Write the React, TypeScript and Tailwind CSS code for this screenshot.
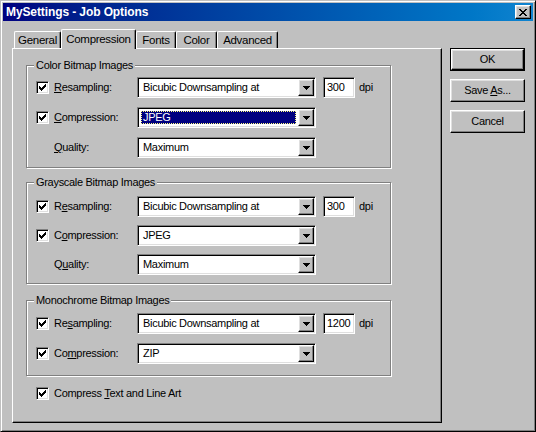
import React from "react";

const raised =
  "border border-t-white border-l-white border-b-black border-r-black shadow-[inset_-1px_-1px_0_#808080,inset_1px_1px_0_#dfdfdf]";
const sunken =
  "border border-t-[#808080] border-l-[#808080] border-b-white border-r-white shadow-[inset_1px_1px_0_#000,inset_-1px_-1px_0_#dfdfdf]";

function CheckMark() {
  return (
    <svg width="7" height="7" viewBox="0 0 7 7" shapeRendering="crispEdges">
      <path
        fill="#000"
        d="M6 0h1v1h-1z M5 1h2v1h-2z M0 2h1v1h-1z M4 2h3v1h-3z M0 3h2v1h-2z M3 3h3v1h-3z M0 4h5v1h-5z M1 5h3v1h-3z M2 6h1v1h-1z"
      />
    </svg>
  );
}

function Checkbox() {
  return (
    <div className={`w-[13px] h-[13px] shrink-0 bg-white flex items-center justify-center ${sunken}`}>
      <CheckMark />
    </div>
  );
}

function Arrow() {
  return (
    <svg width="7" height="4" viewBox="0 0 7 4" shapeRendering="crispEdges">
      <path fill="#000" d="M0 0h7v1h-7z M1 1h5v1h-5z M2 2h3v1h-3z M3 3h1v1h-1z" />
    </svg>
  );
}

function Combo({ value, focused }: { value: string; focused?: boolean }) {
  return (
    <div className={`w-[179px] h-[21px] shrink-0 bg-white flex p-[2px] ${sunken}`}>
      <div className="flex-1 flex items-stretch">
        {focused ? (
          <div className="flex-1 m-[1px] mr-[2px] bg-[#000080] text-white border border-dotted border-[#ffff7f] flex items-center pl-[1px]">
            {value}
          </div>
        ) : (
          <div className="flex-1 flex items-center pl-[3px]">{value}</div>
        )}
      </div>
      <div className={`w-[16px] h-[17px] -mt-[1px] -mr-[1px] bg-[#c0c0c0] flex items-center justify-center pl-[1px] pt-[1px] ${raised}`}>
        <Arrow />
      </div>
    </div>
  );
}

function Row({
  label,
  ul,
  value,
  check = true,
  focused,
  dpi,
}: {
  label: string;
  ul: number;
  value: string;
  check?: boolean;
  focused?: boolean;
  dpi?: string;
}) {
  return (
    <div className="flex items-center h-[21px]">
      {check ? <Checkbox /> : <div className="w-[13px] shrink-0" />}
      <div className="ml-[5px] w-[83px] shrink-0">
        {label.slice(0, ul)}
        <u className="underline-offset-1">{label[ul]}</u>
        {label.slice(ul + 1)}
      </div>
      <Combo value={value} focused={focused} />
      {dpi && (
        <>
          <div className={`ml-[7px] w-[32px] h-[21px] bg-white flex items-center pl-[3px] ${sunken}`}>{dpi}</div>
          <div className="ml-[4px]">dpi</div>
        </>
      )}
    </div>
  );
}

function Group({
  title,
  className,
  children,
}: {
  title: string;
  className: string;
  children: React.ReactNode;
}) {
  return (
    <div
      className={`relative w-[365px] border border-[#808080] shadow-[inset_1px_1px_0_#fff,1px_1px_0_#fff] pl-[9px] flex flex-col ${className}`}
    >
      <span className="absolute -top-[7px] left-[7px] px-[2px] bg-[#c0c0c0] leading-[13px]">{title}</span>
      {children}
    </div>
  );
}

function Button({ children, primary }: { children: React.ReactNode; primary?: boolean }) {
  if (primary) {
    return (
      <div className="w-[75px] h-[23px] border border-black">
        <div className={`w-full h-full bg-[#c0c0c0] flex items-center justify-center ${raised}`}>{children}</div>
      </div>
    );
  }
  return (
    <div className={`w-[75px] h-[23px] bg-[#c0c0c0] flex items-center justify-center ${raised}`}>{children}</div>
  );
}

const tabs = [
  { name: "General", w: "w-[47px]" },
  { name: "Compression", w: "w-[75px]", active: true },
  { name: "Fonts", w: "w-[40px]" },
  { name: "Color", w: "w-[41px]" },
  { name: "Advanced", w: "w-[61px]" },
];

export default function App() {
  return (
    <div className="w-[536px] h-[432px] bg-[#c0c0c0] border border-t-[#c0c0c0] border-l-[#c0c0c0] border-b-black border-r-black shadow-[inset_1px_1px_0_#fff,inset_-1px_-1px_0_#808080] p-[2px] font-['Liberation_Sans',Arial,sans-serif] text-[11px] leading-[13px] tracking-[-0.3px] text-black select-none">
      {/* title bar */}
      <div className="h-[18px] bg-linear-to-r from-[#000080] to-[#1084d0] flex items-center justify-between pl-[3px] pr-[2px]">
        <span className="text-white font-bold text-[12px] tracking-[-0.1px]">MySettings - Job Options</span>
        <div className={`w-[16px] h-[14px] bg-[#c0c0c0] flex items-center justify-center ${raised}`}>
          <svg width="8" height="7" viewBox="0 0 8 7" shapeRendering="crispEdges">
            <path
              fill="#000"
              d="M0 0h2v1h-2z M6 0h2v1h-2z M1 1h2v1h-2z M5 1h2v1h-2z M2 2h4v1h-4z M3 3h2v1h-2z M2 4h4v1h-4z M1 5h2v1h-2z M5 5h2v1h-2z M0 6h2v1h-2z M6 6h2v1h-2z"
            />
          </svg>
        </div>
      </div>

      <div className="flex pt-[8px] pl-[9px]">
        <div className="w-[430px] flex flex-col">
          {/* tabs */}
          <div className="h-[19px] flex items-start pl-[2px]">
            {tabs.map((t) =>
              t.active ? (
                <div
                  key={t.name}
                  className={`${t.w} h-[20px] relative z-10 bg-[#c0c0c0] border-l border-t border-r border-l-white border-t-white border-r-black shadow-[inset_-1px_0_0_#808080] rounded-t-[2px] flex justify-center pt-[3px] text-[11.5px]`}
                >
                  {t.name}
                </div>
              ) : (
                <div
                  key={t.name}
                  className={`${t.w} mt-[2px] h-[17px] bg-[#c0c0c0] border-l border-t border-r border-l-white border-t-white border-r-black shadow-[inset_-1px_0_0_#808080] rounded-t-[2px] flex justify-center pt-[2px] text-[11.5px]`}
                >
                  {t.name}
                </div>
              )
            )}
          </div>

          {/* panel */}
          <div className="h-[375px] border border-t-white border-l-white border-b-black border-r-black shadow-[inset_-1px_-1px_0_#808080] pl-[13px] pt-[16px] flex flex-col">
            <Group title="Color Bitmap Images" className="pt-[11px] pb-[9px] gap-[9px]">
              <Row label="Resampling:" ul={0} value="Bicubic Downsampling at" dpi="300" />
              <Row label="Compression:" ul={0} value="JPEG" focused />
              <Row label="Quality:" ul={0} value="Maximum" check={false} />
            </Group>

            <Group title="Grayscale Bitmap Images" className="mt-[14px] pt-[13px] pb-[8px] gap-[8px]">
              <Row label="Resampling:" ul={1} value="Bicubic Downsampling at" dpi="300" />
              <Row label="Compression:" ul={1} value="JPEG" />
              <Row label="Quality:" ul={1} value="Maximum" check={false} />
            </Group>

            <Group title="Monochrome Bitmap Images" className="mt-[16px] pt-[12px] pb-[11px] gap-[9px]">
              <Row label="Resampling:" ul={2} value="Bicubic Downsampling at" dpi="1200" />
              <Row label="Compression:" ul={2} value="ZIP" />
            </Group>

            <div className="mt-[11px] ml-[10px] h-[13px] flex items-center">
              <Checkbox />
              <span className="ml-[5px]">
                Compress <u className="underline-offset-1">T</u>ext and Line Art
              </span>
            </div>
          </div>
        </div>

        {/* buttons */}
        <div className="ml-[8px] mt-[19px] flex flex-col gap-[8px]">
          <Button primary>OK</Button>
          <Button>
            <span>
              Save <u className="underline-offset-1">A</u>s...
            </span>
          </Button>
          <Button>Cancel</Button>
        </div>
      </div>
    </div>
  );
}
